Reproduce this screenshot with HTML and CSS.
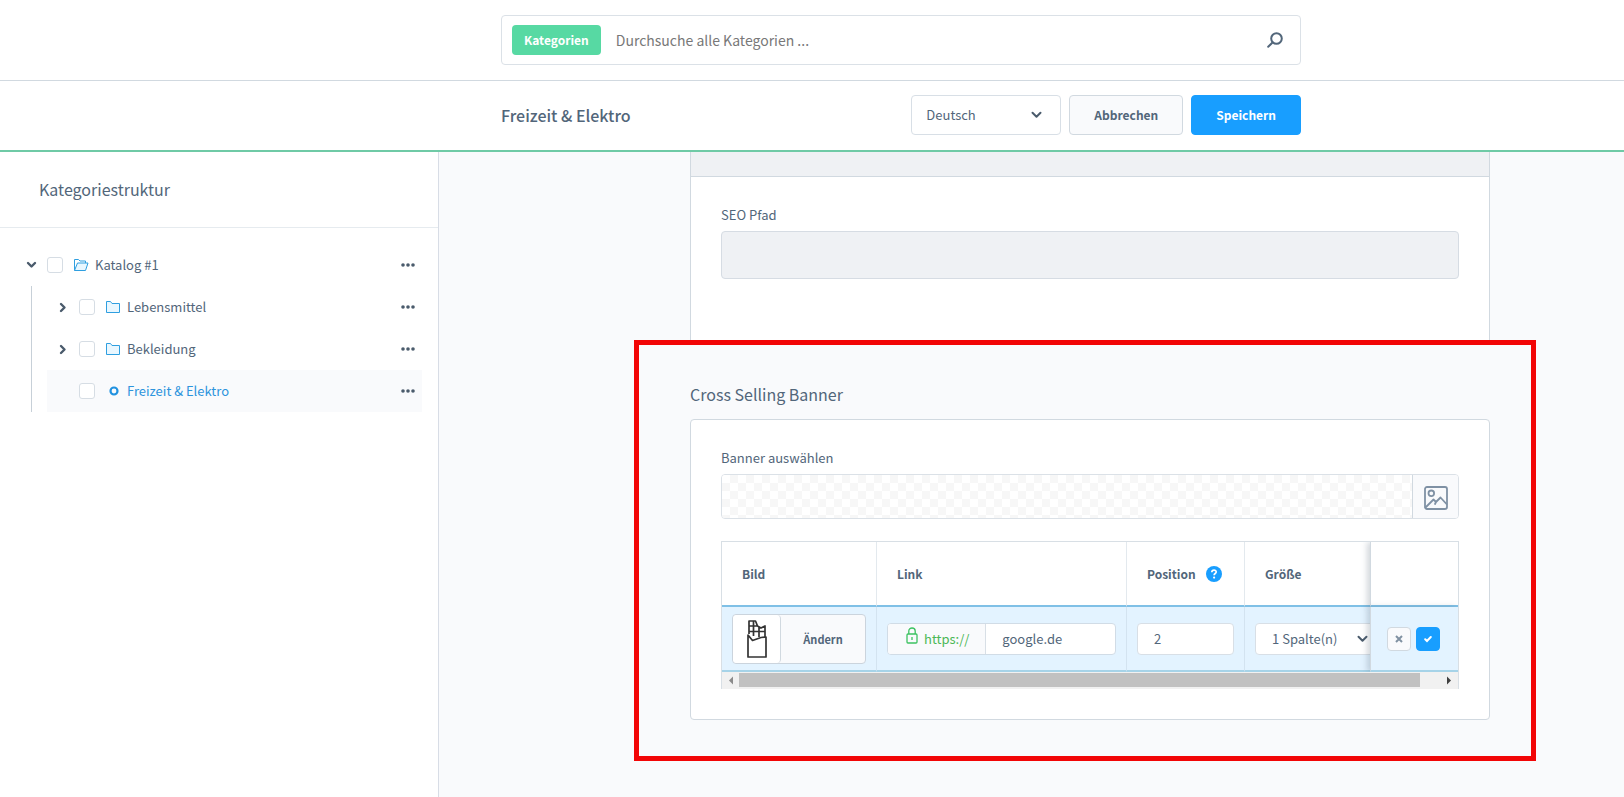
FILE: index.html
```html
<!DOCTYPE html>
<html lang="de">
<head>
<meta charset="utf-8">
<title>Kategorien</title>
<link rel="stylesheet" href="styles.css">
</head>
<body>
<header class="topbar">
  <form class="search" role="search">
    <span class="search-tag">Kategorien</span>
    <input class="search-input" type="text" aria-label="Suche" placeholder="Durchsuche alle Kategorien ...">
    <button class="search-button" type="button" aria-label="Suchen">
      <svg width="16" height="16" viewBox="0 0 16 16" fill="none" stroke="#52667a" stroke-width="2" stroke-linecap="round"><circle cx="9.500" cy="6.500" r="5.300"/><path d="M5.500 10.500L1.200 14.800"/></svg>
    </button>
  </form>
</header>
<div class="toolbar">
  <div class="toolbar-inner">
    <h1 class="page-title">Freizeit &amp; Elektro</h1>
    <div class="select language">
      <select class="control" aria-label="Sprache"><option>Deutsch</option></select>
      <svg class="select-arrow" width="11" height="8" viewBox="0 0 11 8" fill="none" stroke="#4a5b6c" stroke-width="2" stroke-linecap="round" stroke-linejoin="round"><path d="M1.500 1.800L5.500 5.800L9.500 1.800"/></svg>
    </div>
    <button class="button" type="button">Abbrechen</button>
    <button class="button button-primary" type="button">Speichern</button>
  </div>
</div>
<div class="body">
  <aside class="sidebar">
    <h2 class="sidebar-title">Kategoriestruktur</h2>
    <ul class="tree">
      <li>
        <div class="row">
          <button class="toggle" type="button" aria-label="Einklappen"><svg width="11" height="8" viewBox="0 0 11 8" fill="none" stroke="#4a5b6c" stroke-width="2.400" stroke-linecap="round" stroke-linejoin="round"><path d="M2 2L5.500 5.500L9 2"/></svg></button>
          <input class="check" type="checkbox" aria-label="Katalog #1 auswählen">
          <svg class="node-icon" width="16" height="14" viewBox="0 0 16 14" fill="none" stroke="#2f9fe0" stroke-linejoin="round"><path d="M1.500 12.500V1.500H5.500L7 3H12.500V5" /><path fill="#e9f7ff" d="M1.500 12.500L4.500 5H15L12.500 12.500Z"/></svg>
          <a class="node-name" href="#">Katalog #1</a>
          <button class="dots" type="button" aria-label="Menü"><svg width="14" height="4" viewBox="0 0 14 4" fill="#4a5b6c"><circle cx="2" cy="2" r="1.800"/><circle cx="7" cy="2" r="1.800"/><circle cx="12" cy="2" r="1.800"/></svg></button>
        </div>
        <ul class="children">
          <li class="row">
            <button class="toggle" type="button" aria-label="Ausklappen"><svg width="8" height="11" viewBox="0 0 8 11" fill="none" stroke="#4a5b6c" stroke-width="2.400" stroke-linecap="round" stroke-linejoin="round"><path d="M2 2L5.500 5.500L2 9"/></svg></button>
            <input class="check" type="checkbox" aria-label="Lebensmittel auswählen">
            <svg class="node-icon" width="16" height="14" viewBox="0 0 16 14" fill="#e9f7ff" stroke="#2f9fe0" stroke-linejoin="round"><path d="M1.500 12.500V1.500H5.500L7 3.500H14.500V12.500Z"/></svg>
            <a class="node-name" href="#">Lebensmittel</a>
            <button class="dots" type="button" aria-label="Menü"><svg width="14" height="4" viewBox="0 0 14 4" fill="#4a5b6c"><circle cx="2" cy="2" r="1.800"/><circle cx="7" cy="2" r="1.800"/><circle cx="12" cy="2" r="1.800"/></svg></button>
          </li>
          <li class="row">
            <button class="toggle" type="button" aria-label="Ausklappen"><svg width="8" height="11" viewBox="0 0 8 11" fill="none" stroke="#4a5b6c" stroke-width="2.400" stroke-linecap="round" stroke-linejoin="round"><path d="M2 2L5.500 5.500L2 9"/></svg></button>
            <input class="check" type="checkbox" aria-label="Bekleidung auswählen">
            <svg class="node-icon" width="16" height="14" viewBox="0 0 16 14" fill="#e9f7ff" stroke="#2f9fe0" stroke-linejoin="round"><path d="M1.500 12.500V1.500H5.500L7 3.500H14.500V12.500Z"/></svg>
            <a class="node-name" href="#">Bekleidung</a>
            <button class="dots" type="button" aria-label="Menü"><svg width="14" height="4" viewBox="0 0 14 4" fill="#4a5b6c"><circle cx="2" cy="2" r="1.800"/><circle cx="7" cy="2" r="1.800"/><circle cx="12" cy="2" r="1.800"/></svg></button>
          </li>
          <li class="row row-active">
            <span class="toggle"></span>
            <input class="check" type="checkbox" aria-label="Freizeit &amp; Elektro auswählen">
            <svg class="node-icon" width="16" height="14" viewBox="0 0 16 14" fill="none" stroke="#2192e0" stroke-width="2.200"><circle cx="9" cy="7" r="3.500"/></svg>
            <a class="node-name" href="#">Freizeit &amp; Elektro</a>
            <button class="dots" type="button" aria-label="Menü"><svg width="14" height="4" viewBox="0 0 14 4" fill="#4a5b6c"><circle cx="2" cy="2" r="1.800"/><circle cx="7" cy="2" r="1.800"/><circle cx="12" cy="2" r="1.800"/></svg></button>
          </li>
        </ul>
      </li>
    </ul>
  </aside>
  <main class="content">
    <div class="column">
      <section class="card card-seo">
        <div class="card-band"></div>
        <div class="card-body">
          <label class="label" for="seo">SEO Pfad</label>
          <input class="seo-input" id="seo" type="text" disabled>
        </div>
      </section>
      <section class="banner">
        <h2 class="section-title">Cross Selling Banner</h2>
        <div class="card">
          <div class="card-body">
            <label class="label" for="pick">Banner auswählen</label>
            <div class="upload">
              <div class="upload-preview"></div>
              <button class="upload-button" id="pick" type="button" aria-label="Medium öffnen">
                <svg width="24" height="24" viewBox="0 0 24 24" fill="none" stroke="#7f91a4" stroke-width="1.800" stroke-linecap="round" stroke-linejoin="round"><rect x="1" y="1" width="22" height="22" rx="2"/><circle cx="7.300" cy="7.300" r="2.800"/><path d="M1.500 21.500L9.500 13.500L12 16L11 18M12 16L16.500 11.500L22.500 18"/></svg>
              </button>
            </div>
            <div class="grid">
              <div class="grid-scroll">
                <table class="table">
                  <colgroup><col class="c-image"><col class="c-link"><col class="c-pos"><col class="c-size"><col class="c-act"></colgroup>
                  <thead>
                    <tr><th>Bild</th><th>Link</th><th><span class="th-help">Position <svg width="16" height="16" viewBox="0 0 16 16" fill="none"><circle cx="8" cy="8" r="8" fill="#189eff"/><path d="M5.800 6.200C5.900 3.400 10.300 3.500 10.200 6C10.200 7.500 8.200 7.500 8.100 9.200" stroke="#fff" stroke-width="1.700"/><circle cx="8.100" cy="11.600" r="1.100" fill="#fff"/></svg></span></th><th>Größe</th><th class="fixed" aria-label="Aktionen"></th></tr>
                  </thead>
                  <tbody>
                    <tr>
                      <td>
                        <button class="media" type="button">
                          <span class="thumb"><svg width="20" height="38" viewBox="0 0 20 38" fill="none" stroke="#333" stroke-width="1.700" stroke-linejoin="round"><path d="M2 14V1H8.500L10.500 6L14 8L18 6V17M2 6H10.500M2 11.500H18M6.500 1V16M12 7.500V17"/><path fill="#fff" d="M1 15L5.500 20.500L14 17.500L19 17V37H1Z"/></svg></span>
                          <span class="media-text">Ändern</span>
                        </button>
                      </td>
                      <td>
                        <div class="link-field">
                          <span class="scheme"><svg class="lock" width="12" height="17" viewBox="0 0 12 17" fill="none" stroke="#3cc261" stroke-width="1.300"><rect x="1" y="7" width="10" height="9" rx="1"/><path d="M2.800 7V4C2.800 0 9.200 0 9.200 4V7M6 10V13"/></svg>https://</span>
                          <input class="link-input" type="text" aria-label="Link" value="google.de">
                        </div>
                      </td>
                      <td><input class="control cell-input" type="text" aria-label="Position" value="2"></td>
                      <td>
                        <div class="select cell-select">
                          <select class="control cell-input" aria-label="Größe"><option>1 Spalte(n)</option></select>
                          <svg class="select-arrow" width="11" height="8" viewBox="0 0 11 8" fill="none" stroke="#4a5b6c" stroke-width="2" stroke-linecap="round" stroke-linejoin="round"><path d="M1.500 1.800L5.500 5.800L9.500 1.800"/></svg>
                        </div>
                      </td>
                      <td class="fixed">
                        <div class="actions">
                          <button class="action" type="button" aria-label="Abbrechen"><svg width="8" height="8" viewBox="0 0 8 8" stroke="#8091a2" stroke-width="2"><path d="M1 1L7 7M7 1L1 7"/></svg></button>
                          <button class="action action-ok" type="button" aria-label="Speichern"><svg width="8" height="8" viewBox="0 0 8 8" fill="none" stroke="#fff" stroke-width="2" stroke-linecap="round"><path d="M1.200 4.200L3 6L6.800 2"/></svg></button>
                        </div>
                      </td>
                    </tr>
                  </tbody>
                </table>
              </div>
              <div class="scrollbar">
                <svg width="17" height="17" viewBox="0 0 17 17" fill="#8b8b8b"><path d="M11 4.500V12.500L7 8.500Z"/></svg>
                <div class="track"><div class="thumb-bar"></div></div>
                <svg width="17" height="17" viewBox="0 0 17 17" fill="#3f3f3f"><path d="M6 4.500V12.500L10 8.500Z"/></svg>
              </div>
            </div>
          </div>
        </div>
      </section>
    </div>
  </main>
</div>
</body>
</html>
```
FILE: styles.css
```css
* {
  box-sizing: border-box;
}

body {
  margin: 0;
  min-height: 100vh;
  display: flex;
  flex-direction: column;
  background: #fff;
  color: #52667a;
  font-family: "Noto Sans CJK SC", "Open Sans", sans-serif;
  font-size: 13px;
  line-height: 20px;
}

button,
input,
select {
  margin: 0;
  padding: 0;
  border: 0;
  background: none;
  color: inherit;
  font: inherit;
  outline: none;
}

button {
  cursor: pointer;
}

svg {
  display: block;
  flex: none;
}

ul {
  margin: 0;
  padding: 0;
  list-style: none;
}

a {
  color: inherit;
  text-decoration: none;
}

/* Header */
.topbar,
.toolbar {
  display: grid;
  grid-template-columns: 501fr minmax(0, 800px) 323fr;
}

.topbar {
  padding: 15px 0;
  border-bottom: 1px solid #d1d9e0;
}

.search {
  grid-column: 2;
  display: flex;
  align-items: center;
  gap: 15px;
  height: 50px;
  padding: 0 17px 0 10px;
  border: 1px solid #dbe1e7;
  border-radius: 4px;
}

.search-tag {
  padding: 5px 12px;
  border-radius: 4px;
  background: #57d9a3;
  color: #fff;
  font-size: 12px;
  font-weight: 700;
}

.search-input {
  flex: 1;
  min-width: 0;
  font-size: 14px;
}

.search-input::placeholder {
  color: #787878;
  opacity: 1;
}

.toolbar {
  padding: 14px 0 15px;
  border-bottom: 2px solid #6fcaa6;
}

.toolbar-inner {
  grid-column: 2;
  display: flex;
  align-items: center;
  gap: 8px;
}

.page-title {
  flex: 1;
  margin: 0;
  font-size: 16px;
  font-weight: 500;
}

.select {
  position: relative;
}

.select-arrow {
  position: absolute;
  top: 50%;
  right: 19px;
  margin-top: -4px;
  pointer-events: none;
}

.control {
  display: block;
  width: 100%;
  height: 40px;
  padding: 0 14px;
  border: 1px solid #d8dfe6;
  border-radius: 4px;
  background: #fff;
  appearance: none;
}

.language {
  width: 150px;
}

.button {
  height: 40px;
  padding: 0 24px;
  border: 1px solid #d1d9e0;
  border-radius: 4px;
  background: #f9fafc;
  font-size: 12px;
  font-weight: 700;
}

.button-primary {
  border-color: #189eff;
  background: #189eff;
  color: #fff;
}

/* Sidebar */
.body {
  flex: 1;
  display: flex;
}

.sidebar {
  flex: none;
  width: 439px;
  border-right: 1px solid #d8dde6;
}

.sidebar-title {
  margin: 0;
  padding: 25px 39px 26px;
  border-bottom: 1px solid #e6ebef;
  font-size: 16px;
  font-weight: 400;
  line-height: 24px;
}

.tree {
  padding: 16px;
}

.row {
  display: flex;
  align-items: center;
  height: 42px;
  padding-right: 7px;
}

.row-active {
  background: #f9fafc;
  color: #2d94dd;
}

.toggle {
  display: flex;
  justify-content: center;
  width: 31px;
}

.children .toggle {
  width: 32px;
}

.check {
  width: 16px;
  height: 16px;
  border: 1px solid #d6dde4;
  border-radius: 3px;
  background: #fff;
  appearance: none;
}

.node-icon {
  margin: 0 6px 0 10px;
}

.node-name {
  flex: 1;
}

.children {
  margin-left: 15px;
  padding-left: 15px;
  border-left: 1px solid #c7d0d8;
}

/* Content */
.content {
  flex: 1;
  display: grid;
  grid-template-columns: 251fr minmax(0, 800px) 134fr;
  background: #f9fafc;
}

.column {
  grid-column: 2;
}

.card {
  border: 1px solid #d1d9e0;
  border-radius: 4px;
  background: #fff;
}

.card-seo {
  border-width: 0 1px;
  border-radius: 0;
}

.card-band {
  height: 25px;
  border-bottom: 1px solid #d1d9e0;
  background: #eff1f4;
}

.card-body {
  padding: 28px 30px 30px;
}

.card-seo .card-body {
  padding-bottom: 62px;
}

.label {
  display: block;
  margin-bottom: 6px;
}

.seo-input {
  display: block;
  width: 100%;
  height: 48px;
  border: 1px solid #d6dce3;
  border-radius: 4px;
  background: #eff1f4;
}

.banner {
  position: relative;
  padding: 41px 0;
}

/* Highlight frame drawn over the surrounding cards */
.banner::after {
  content: "";
  position: absolute;
  inset: -1px -46px 0 -56px;
  border: 5px solid #f20506;
  pointer-events: none;
}

.section-title {
  margin: 0 0 13px;
  font-size: 16px;
  font-weight: 400;
  line-height: 24px;
}

.upload {
  display: flex;
  height: 45px;
  margin-bottom: 22px;
  border: 1px solid #dbe1e7;
  border-radius: 4px;
  overflow: hidden;
}

.upload-preview {
  flex: 1;
  background: repeating-conic-gradient(#f7f7f7 0 25%, #fff 0 50%) 0 0 / 16px 16px;
}

.upload-button {
  display: grid;
  place-items: center;
  width: 46px;
  padding-top: 2px;
  border-left: 1px solid #d1d9e0;
  background: #f9fafc;
}

/* Data grid */
.grid {
  border: 1px solid #d8dfe5;
  border-bottom: 0;
}

.grid-scroll {
  overflow: hidden;
}

.table {
  width: 774px;
  table-layout: fixed;
  border-spacing: 0;
}

.c-image {
  width: 155px;
}

.c-link {
  width: 250px;
}

.c-pos {
  width: 118px;
}

.c-size {
  width: 163px;
}

.c-act {
  width: 88px;
}

.table th {
  height: 65px;
  padding: 0 20px;
  border-right: 1px solid #e3e9ee;
  border-bottom: 2px solid #7fc0e6;
  font-size: 12px;
  font-weight: 700;
  text-align: left;
}

.table td {
  height: 65px;
  padding: 0 10px;
  border-right: 1px solid #d3e3f0;
  border-bottom: 2px solid #a6d3e8;
  background: #e3f3ff;
}

.table .fixed {
  position: sticky;
  right: 0;
  padding: 0 16px;
  border-right: 0;
  border-left: 1px solid #d1d9e0;
  box-shadow: -3px 0 6px rgba(80, 95, 115, 0.25);
}

.table th.fixed {
  background: #fff;
}

.th-help {
  display: flex;
  align-items: center;
  gap: 10px;
}

.media {
  display: flex;
  align-items: center;
  width: 100%;
  height: 50px;
  border: 1px solid #cbd4dd;
  border-radius: 4px;
  background: #f9fafc;
}

.thumb {
  display: grid;
  place-items: center;
  width: 48px;
  height: 48px;
  border-right: 1px solid #d1d9e0;
  border-radius: 4px;
  background: #fff;
}

.media-text {
  flex: 1;
  font-size: 11px;
  font-weight: 700;
}

.link-field {
  display: flex;
  height: 32px;
  border: 1px solid #d1dce6;
  border-radius: 4px;
  background: #fff;
  overflow: hidden;
}

.scheme {
  display: flex;
  align-items: center;
  gap: 6px;
  padding: 0 16px 0 18px;
  border-right: 1px solid #d8dfe6;
  background: #f9fafc;
  color: #4bb856;
}

.lock {
  margin-bottom: 6px;
}

.link-input {
  flex: 1;
  min-width: 0;
  padding: 0 16px;
}

.cell-input {
  height: 32px;
  padding: 0 16px;
}

.cell-select {
  width: 132px;
}

.actions {
  display: flex;
  gap: 5px;
}

.action {
  display: grid;
  place-items: center;
  width: 24px;
  height: 24px;
  border: 1px solid #d1d9e0;
  border-radius: 4px;
  background: #f9fafc;
}

.action-ok {
  border-color: #189eff;
  background: #189eff;
}

.scrollbar {
  display: flex;
  height: 17px;
  background: #f1f1f1;
}

.track {
  flex: 1;
  padding: 1px 0 2px;
}

.thumb-bar {
  width: 97%;
  height: 100%;
  background: #c1c1c1;
}
```
